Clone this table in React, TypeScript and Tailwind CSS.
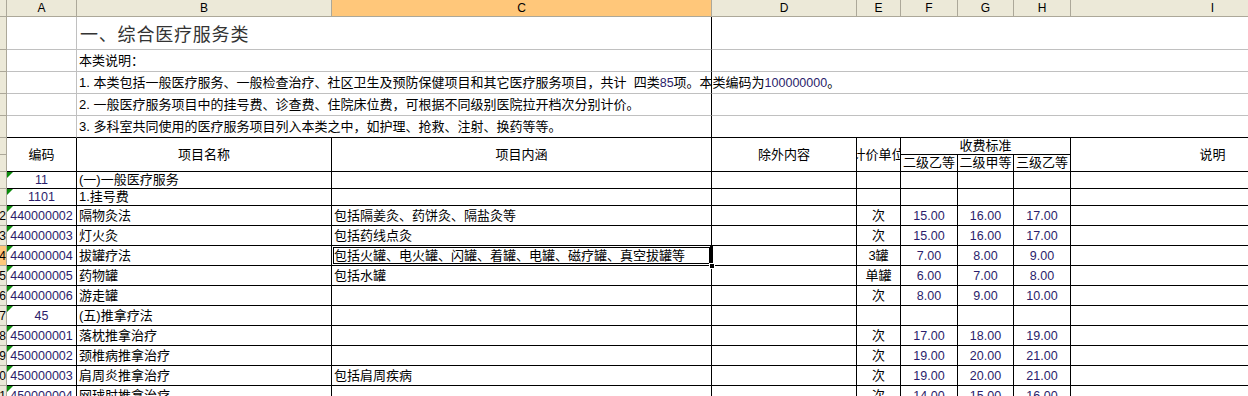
import React from 'react';

const COLS = [
  { id: 'A', w: 'w-[70px]' },
  { id: 'B', w: 'w-[255px]' },
  { id: 'C', w: 'w-[380px]' },
  { id: 'D', w: 'w-[145px]' },
  { id: 'E', w: 'w-[44px]' },
  { id: 'F', w: 'w-[57px]' },
  { id: 'G', w: 'w-[56px]' },
  { id: 'H', w: 'w-[57px]' },
  { id: 'I', w: 'w-[284px]' },
];

type Row = {
  n: string;
  code: string;
  name: string;
  content?: string;
  unit?: string;
  p?: string[];
  tall?: boolean;
  sel?: boolean;
};

const ROWS: Row[] = [
  { n: '', code: '11', name: '(一)一般医疗服务' },
  { n: '', code: '1101', name: '1.挂号费' },
  { n: '2', code: '440000002', name: '隔物灸法', content: '包括隔姜灸、药饼灸、隔盐灸等', unit: '次', p: ['15.00', '16.00', '17.00'], tall: true },
  { n: '3', code: '440000003', name: '灯火灸', content: '包括药线点灸', unit: '次', p: ['15.00', '16.00', '17.00'], tall: true },
  { n: '4', code: '440000004', name: '拔罐疗法', content: '包括火罐、电火罐、闪罐、着罐、电罐、磁疗罐、真空拔罐等', unit: '3罐', p: ['7.00', '8.00', '9.00'], tall: true, sel: true },
  { n: '5', code: '440000005', name: '药物罐', content: '包括水罐', unit: '单罐', p: ['6.00', '7.00', '8.00'], tall: true },
  { n: '6', code: '440000006', name: '游走罐', unit: '次', p: ['8.00', '9.00', '10.00'], tall: true },
  { n: '7', code: '45', name: '(五)推拿疗法', tall: true },
  { n: '8', code: '450000001', name: '落枕推拿治疗', unit: '次', p: ['17.00', '18.00', '19.00'], tall: true },
  { n: '9', code: '450000002', name: '颈椎病推拿治疗', unit: '次', p: ['19.00', '20.00', '21.00'], tall: true },
  { n: '0', code: '450000003', name: '肩周炎推拿治疗', content: '包括肩周疾病', unit: '次', p: ['19.00', '20.00', '21.00'], tall: true },
  { n: '1', code: '450000004', name: '网球肘推拿治疗', unit: '次', p: ['14.00', '15.00', '16.00'], tall: true },
];

const NUM = 'text-[12.5px] text-[#2b1d6b]';

function RowHead({ n, sel, split }: { n?: string; sel?: boolean; split?: boolean }) {
  if (split) {
    return (
      <div className="w-[7px] shrink-0 flex flex-col bg-[#ECE9D8] border-r border-[#ACA899]">
        <div className="h-[17px] border-b border-[#ACA899]" />
        <div className="flex-1 border-b border-[#ACA899]" />
      </div>
    );
  }
  return (
    <div
      className={`w-[7px] shrink-0 overflow-hidden flex items-center justify-end border-r border-b border-[#ACA899] text-[12px] ${
        sel ? 'bg-[#FFC77A]' : 'bg-[#ECE9D8]'
      }`}
    >
      <span className="shrink-0">{n}</span>
    </div>
  );
}

function Flag() {
  return (
    <svg className="absolute left-0 top-0" width="6" height="6">
      <path d="M0 0H6L0 6Z" fill="#0b8a0b" />
    </svg>
  );
}

export default function App() {
  return (
    <div className="w-[1248px] h-[396px] overflow-hidden bg-white text-black font-['Liberation_Sans','Noto_Sans_CJK_SC',sans-serif] text-[13px] leading-[14px]">
      {/* column letters */}
      <div className="flex h-[17px] w-max">
        <div className="w-[7px] shrink-0 bg-[#ECE9D8] border-r border-b border-[#ACA899]" />
        {COLS.map((c) => (
          <div
            key={c.id}
            className={`${c.w} shrink-0 flex items-center justify-center border-r border-b border-[#ACA899] text-[12px] ${
              c.id === 'C' ? 'bg-[#FFC77A]' : 'bg-[#ECE9D8]'
            }`}
          >
            {c.id}
          </div>
        ))}
      </div>

      {/* title + notes */}
      <div className="flex h-[33px] w-max">
        <RowHead />
        <div className="w-[70px] shrink-0 border-r border-b border-[#C0C0C0]" />
        <div className="w-[635px] shrink-0 flex items-center pt-[4px] pl-[3px] whitespace-nowrap border-r border-r-black border-b border-b-[#C0C0C0] text-[18px] leading-none tracking-[0.8px] text-[#333]">
          一、综合医疗服务类
        </div>
        <div className="w-[643px] shrink-0 border-b border-[#C0C0C0]" />
      </div>
      {[
        <>本类说明：</>,
        <>
          1. 本类包括一般医疗服务、一般检查治疗、社区卫生及预防保健项目和其它医疗服务项目，共计&nbsp;&nbsp;四类<span className={NUM}>85</span>项。本类编码为
          <span className={NUM}>100000000</span>。
        </>,
        <>2. 一般医疗服务项目中的挂号费、诊查费、住院床位费，可根据不同级别医院拉开档次分别计价。</>,
        <>3. 多科室共同使用的医疗服务项目列入本类之中，如护理、抢救、注射、换药等等。</>,
      ].map((t, i) => (
        <div key={i} className="flex h-[22px] w-max">
          <RowHead />
          <div className={`w-[70px] shrink-0 border-r border-r-[#C0C0C0] border-b ${i === 3 ? 'border-b-black' : 'border-b-[#C0C0C0]'}`} />
          <div
            className={`w-[635px] shrink-0 flex items-center pl-[2px] whitespace-nowrap border-r border-r-black border-b ${
              i === 3 ? 'border-b-black' : 'border-b-[#C0C0C0]'
            }`}
          >
            {t}
          </div>
          <div className={`w-[643px] shrink-0 border-b ${i === 3 ? 'border-black' : 'border-[#C0C0C0]'}`} />
        </div>
      ))}

      {/* table header */}
      <div className="flex h-[34px] w-max">
        <RowHead split />
        <div className="w-[70px] shrink-0 flex items-center justify-center border-r border-b border-black">编码</div>
        <div className="w-[255px] shrink-0 flex items-center justify-center border-r border-b border-black">项目名称</div>
        <div className="w-[380px] shrink-0 flex items-center justify-center border-r border-b border-black">项目内涵</div>
        <div className="w-[145px] shrink-0 flex items-center justify-center border-r border-b border-black">除外内容</div>
        <div className="w-[44px] shrink-0 overflow-hidden flex items-center justify-center border-r border-b border-black">
          <span className="shrink-0 whitespace-nowrap">计价单位</span>
        </div>
        <div className="w-[170px] shrink-0 flex flex-col border-b border-black">
          <div className="h-[17px] flex items-center justify-center border-r border-b border-black">收费标准</div>
          <div className="flex flex-1">
            <div className="w-[57px] shrink-0 flex items-center justify-center border-r border-black whitespace-nowrap">二级乙等</div>
            <div className="w-[56px] shrink-0 flex items-center justify-center border-r border-black whitespace-nowrap">二级甲等</div>
            <div className="w-[57px] shrink-0 flex items-center justify-center border-r border-black whitespace-nowrap">三级乙等</div>
          </div>
        </div>
        <div className="w-[284px] shrink-0 flex items-center justify-center border-r border-b border-black">说明</div>
      </div>

      {/* data rows */}
      {ROWS.map((r, i) => (
        <div key={i} className={`flex w-max ${r.tall ? 'h-[20px]' : 'h-[17px]'}`}>
          <RowHead n={r.n} sel={r.sel} />
          <div className={`relative w-[70px] shrink-0 flex items-center justify-center border-r border-b border-black ${NUM}`}>
            <Flag />
            {r.code}
          </div>
          <div className="w-[255px] shrink-0 flex items-center pl-[2px] whitespace-nowrap border-r border-b border-black">{r.name}</div>
          <div className="relative w-[380px] shrink-0 flex items-center pl-[2px] whitespace-nowrap border-r border-b border-black">
            {r.content}
            {r.sel && (
              <>
                <div className="absolute z-10 top-[1px] left-[1px] right-[1px] bottom-[1px] border border-black" />
                <div className="absolute z-10 top-[-1px] bottom-[-1px] right-[-2px] w-[3px] bg-black" />
                <div className="absolute z-20 right-[-4px] bottom-[-4px] w-[6px] h-[6px] bg-black border border-white" />
              </>
            )}
          </div>
          <div className="w-[145px] shrink-0 border-r border-b border-black" />
          <div className="w-[44px] shrink-0 flex items-center justify-center whitespace-nowrap border-r border-b border-black">{r.unit}</div>
          <div className={`w-[57px] shrink-0 flex items-center justify-center border-r border-b border-black ${NUM}`}>{r.p?.[0]}</div>
          <div className={`w-[56px] shrink-0 flex items-center justify-center border-r border-b border-black ${NUM}`}>{r.p?.[1]}</div>
          <div className={`w-[57px] shrink-0 flex items-center justify-center border-r border-b border-black ${NUM}`}>{r.p?.[2]}</div>
          <div className="w-[284px] shrink-0 border-r border-b border-black" />
        </div>
      ))}
    </div>
  );
}
